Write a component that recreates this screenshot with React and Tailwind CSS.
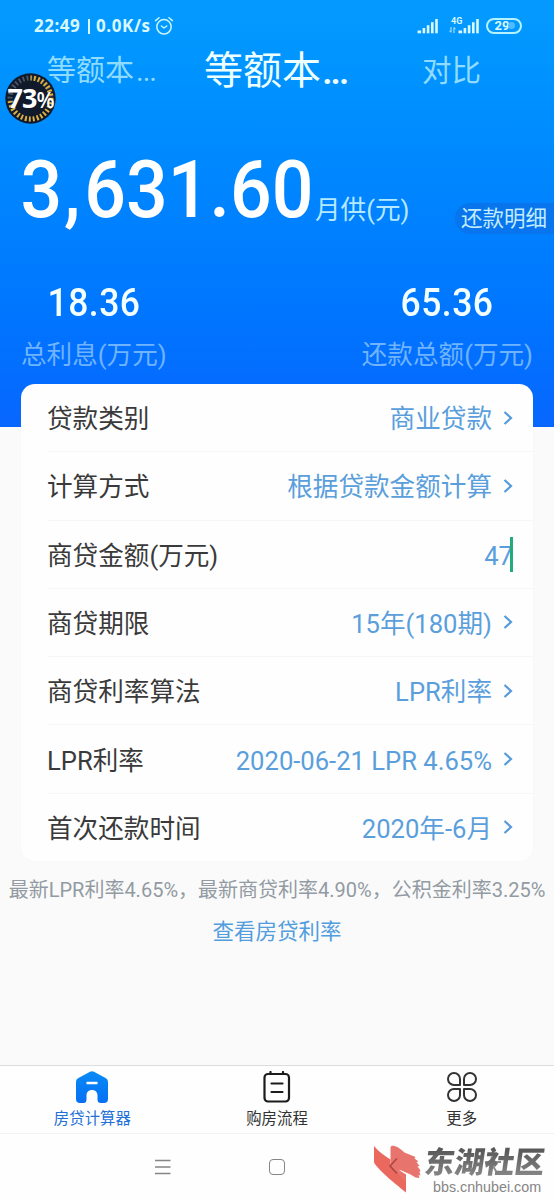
import React from 'react';

const loanRows = [
  { label: '贷款类别', value: '商业贷款' },
  { label: '计算方式', value: '根据贷款金额计算' },
  { label: '商贷金额(万元)', value: '47', input: true },
  { label: '商贷期限', value: '15年(180期)' },
  { label: '商贷利率算法', value: 'LPR利率' },
  { label: 'LPR利率', value: '2020-06-21 LPR 4.65%' },
  { label: '首次还款时间', value: '2020年-6月' },
];

const SignalIcon = () => (
  <svg width="22" height="16" viewBox="0 0 22 16" fill="#d8f8ff">
    <rect x="0.5" y="12.5" width="3.6" height="2.8" />
    <rect x="5.6" y="10" width="2.6" height="5.3" />
    <rect x="9.8" y="7.2" width="2.6" height="8.1" />
    <rect x="14" y="4.2" width="2.6" height="11.1" />
    <rect x="18.2" y="1" width="2.6" height="14.3" />
  </svg>
);

const AlarmIcon = () => (
  <svg width="20" height="20" viewBox="0 0 20 20" fill="none" stroke="#c8f6ff" strokeWidth="1.5" strokeLinecap="round" strokeLinejoin="round">
    <circle cx="10" cy="10.8" r="7.2" />
    <path d="M7.4 10l2.6 2 2.8-2M1.6 4.6l3.4-2.9M18.4 4.6L15 1.7" />
  </svg>
);

const StatusBar = () => (
  <div className="flex h-[50px] items-center pl-[34px] pr-[32px] pt-[1px] text-[#d8f8ff]">
    <div className="flex font-['Open_Sans',sans-serif] text-[17px] font-bold leading-5">
      <span className="w-[49px] tracking-[0.5px]">22:49</span>
      <span className="mx-[5px] mt-[3px] h-[15px] w-[2px] bg-[#d8f8ff]" />
      <span className="w-[59px] pl-[1px] tracking-[0.6px]">0.0K/s</span>
    </div>
    <AlarmIcon />
    <div className="ml-auto flex items-center">
      <SignalIcon />
      <div className="relative ml-[19px]">
        <SignalIcon />
        <span className="absolute -left-[7px] -top-[2px] font-['Roboto',sans-serif] text-[9px] font-bold leading-[10px]">4G</span>
        <svg className="absolute -left-[9px] top-[8px]" width="8" height="8" viewBox="0 0 8 8" fill="none" stroke="#b8ecff">
          <path d="M2 1v5M0.5 4.8L2 6.5M5 7V1.5l1.6 1.4" />
        </svg>
      </div>
      <div className="ml-[6px] flex h-[16px] w-[36px] items-center justify-center rounded-full border-2 border-[#b4f3ff] pl-[2px] font-['Roboto',sans-serif] text-[13px] font-bold leading-3">
        29<span className="-ml-px size-[7px] rounded-full bg-[#4fbcff]" />
      </div>
    </div>
  </div>
);

const BatteryBadge = () => (
  <div className="absolute left-[5px] top-[73px] flex h-[51px] w-[51px] items-center justify-center">
    <svg className="absolute inset-0" width="51" height="51" viewBox="0 0 51 51" fill="none">
      <circle cx="25.5" cy="25.5" r="25.2" fill="#101a2b" />
      <circle cx="25.5" cy="25.5" r="20.5" stroke="#4a5566" strokeWidth="5" strokeDasharray="1.8 2.2" />
      <circle cx="25.5" cy="25.5" r="20.5" stroke="#e3b13a" strokeWidth="5" strokeDasharray="1.8 2.2" pathLength="128.8" mask="url(#level)" />
      <mask id="level" maskUnits="userSpaceOnUse" x="0" y="0" width="51" height="51">
        <circle cx="25.5" cy="25.5" r="20.5" stroke="#fff" strokeWidth="7" pathLength="100" strokeDasharray="73 100" transform="rotate(-90 25.5 25.5)" />
      </mask>
    </svg>
    <span className="relative whitespace-nowrap pb-[3px] font-['Open_Sans',sans-serif] text-[27px] font-bold leading-none tracking-[-1px] text-white">
      73<span className="text-[21px] font-semibold">%</span>
    </span>
  </div>
);

const Total = ({ value, label }) => (
  <div className="flex flex-col items-center">
    <span className="scale-x-[0.91] font-['Roboto',sans-serif] text-[39px] font-medium leading-[42px] tracking-[0.5px] text-[#f4ffff]">{value}</span>
    <span className="mt-[13px] text-[25.6px] leading-[36px] text-[#70b4ff]">{label}</span>
  </div>
);

const Header = () => (
  <header className="relative h-[427px] bg-linear-to-b from-[#0399ff] from-5% to-[#0866ff]">
    <StatusBar />
    <div className="flex h-[42px] items-center whitespace-nowrap">
      <span className="w-[158px] pl-[47px] text-[29px] leading-[42px] text-[#8fdcff]">等额本<span className="ml-[2px] tracking-[-1px]">...</span></span>
      <span className="w-[264px] pl-[46px] text-[39px] leading-[42px] text-[#eeffff]">等额本<span className="ml-px font-medium tracking-[-2.5px]">...</span></span>
      <span className="text-[29.5px] leading-[42px] text-[#8fdcff]">对比</span>
    </div>
    <BatteryBadge />

    <div className="mt-[54px] flex h-[87px] items-start">
      <div className="flex w-[294px] origin-left scale-x-[0.93] pl-[22px] font-['Roboto',sans-serif] text-[79px] font-medium leading-[88px] text-white">
        3<span className="mr-[4px] pl-[2px]">,</span>631<span>.</span>60
      </div>
      <span className="ml-[21px] mt-[46px] text-[25.6px] leading-[36px] text-[#b5e9ff]">月供(元)</span>
      <button className="ml-auto mt-[57px] h-[31px] w-[99px] whitespace-nowrap rounded-l-full bg-[#0b6fe6]/70 pl-[6px] text-left text-[21.5px] leading-[31px] text-[#c2ecff]">还款明细</button>
    </div>

    <div className="mt-[49px] flex justify-between pl-[21px] pr-[21px]">
      <Total value="18.36" label="总利息(万元)" />
      <Total value="65.36" label="还款总额(万元)" />
    </div>
  </header>
);

const LoanForm = () => (
  <section className="relative mx-[21px] -mt-[43px] flex h-[477px] flex-col rounded-[14px] bg-[#fefefe] pl-[26px] shadow-[0_0_3px_rgba(0,0,0,0.02)]">
    {loanRows.map((row) => (
      <div key={row.label} className="flex flex-1 items-center border-b border-[#f5f6f6] pr-[20px] text-[25.6px] leading-[36px] last:border-b-0">
        <span className="pt-[3px] text-[#3a3a3a]">{row.label}</span>
        <span className="ml-auto pt-[3px] text-[#5a9fdc]">{row.value}</span>
        {row.input ? (
          <span className="-ml-[3px] h-[35px] w-[3px] bg-[#22ac7b]" />
        ) : (
          <svg className="ml-[11px]" width="10" height="16" viewBox="0 0 10 16" fill="none" stroke="#559bdc" strokeWidth="2.2">
            <path d="M1.5 2L8 8l-6.5 6" />
          </svg>
        )}
      </div>
    ))}
  </section>
);

const HomeIcon = () => (
  <svg width="32" height="32" viewBox="0 0 32 32">
    <defs>
      <linearGradient id="home" x1="0" y1="0" x2="0" y2="1">
        <stop offset="0" stopColor="#088bf5" />
        <stop offset="1" stopColor="#076ff5" />
      </linearGradient>
    </defs>
    <path fill="url(#home)" d="M14 .8Q16-.3 18 .8L30 7.2q2 1.2 2 3.5V28q0 4-4 4h-3q-3.5 0-3.5-3.5V24.5c0-3.3-2.2-5.5-5.500-5.5S10.500 21.2 10.500 24.5V28.5q0 3.500-3 3.500H4q-4 0-4-4V10.700q0-2.300 2-3.500z" />
    <rect x="10.5" y="10.7" width="11" height="2.6" rx="0.5" fill="#fff" />
  </svg>
);

const ProcessIcon = () => (
  <svg width="28" height="32" viewBox="0 0 28 32" fill="none" stroke="#1c1c1c" strokeWidth="2.2" strokeLinecap="round">
    <rect x="1.5" y="3" width="24.5" height="27.5" rx="3.5" />
    <path d="M7.5 1v2M20 1v2M8.5 12.5h11M8.5 21h11" />
  </svg>
);

const MoreIcon = () => (
  <svg width="30" height="30" viewBox="0 0 30 30" fill="none" stroke="#333" strokeWidth="2" strokeLinejoin="round">
    <path d="M13 13H7a6 6 0 1 1 6-6zM17 13V7a6 6 0 1 1 6 6zM13 17v6a6 6 0 1 1-6-6zM17 17h6a6 6 0 1 1-6 6z" />
  </svg>
);

const tabs = [
  { label: '房贷计算器', icon: <HomeIcon />, active: true },
  { label: '购房流程', icon: <ProcessIcon /> },
  { label: '更多', icon: <MoreIcon /> },
];

const TabBar = () => (
  <nav className="grid h-[69px] grid-cols-3 border-b border-t border-b-[#f3f3f3] border-t-[#dedede] bg-[#fefefe]">
    {tabs.map((tab) => (
      <div key={tab.label} className="flex flex-col items-center pt-[5px]">
        <span className="flex h-[32px] items-center">{tab.icon}</span>
        <span className={tab.active ? 'mt-[5px] text-[15.4px] leading-[22px] text-[#2470d8]' : 'mt-[5px] text-[15.4px] leading-[22px] text-[#333]'}>{tab.label}</span>
      </div>
    ))}
  </nav>
);

const ForumMark = () => (
  <div className="absolute right-[6px] top-[11px] flex w-[175px]">
    <svg width="50" height="50" viewBox="0 0 50 50">
      <path fill="#e8584d" fillOpacity="0.9" d="M1 1C6 7 12 11 17.500 14.500V20l15.500 9.500V47.500C24 40 6 26 1 17.500z" />
      <path fill="#e8756d" d="M17.500 3c0-2.500 2-2.500 4-2 4 1 7 4 10 6.500l11 4.500-1 1.500 4 3-2 .5 3 4-2 .5 3 4-1 1.500 1 3.500-2-.5 1 3-4-.5-5-3-9-4-3-.5 7 6v6L17.500 20z" />
      <path fill="none" stroke="#a9453f" strokeWidth="1.5" d="M24 13.500l-7 7.500 7 7.500" />
    </svg>
    <div className="relative ml-[2px] flex flex-col">
      <svg className="absolute left-[59px] top-[11px]" width="18" height="18" viewBox="0 0 18 18" fill="none" stroke="#444" strokeOpacity="0.6" strokeWidth="2">
        <circle cx="9" cy="2.5" r="1.5" />
        <path d="M1 6h16M9 6v5M9 10l-4 7M9 10l4 7" />
      </svg>
      <span className="-mt-[3px] -skew-x-8 whitespace-nowrap bg-linear-to-b from-[#4c4c4c] to-[#8c8c8c] bg-clip-text font-['Noto_Sans_CJK_SC',sans-serif] text-[30px] font-black leading-[37px] text-transparent">东湖社区</span>
      <span className="ml-[8px] font-['Liberation_Sans',sans-serif] text-[14.3px] leading-[16px] text-[#858585]">bbs.cnhubei.com</span>
    </div>
  </div>
);

const SystemNav = () => (
  <div className="relative flex h-[66px] items-center bg-[#fefefe]">
    <svg className="ml-[155px]" width="16" height="16" viewBox="0 0 16 16" stroke="#858585" strokeWidth="1.4">
      <path d="M0 1.5h15.5M0 8h15.5M0 14.5h15.5" />
    </svg>
    <div className="ml-[98px] h-[16px] w-[16px] rounded-[4px] border-[1.5px] border-[#858585]" />
    <ForumMark />
  </div>
);

const App = () => {
  return (
    <div className="flex h-[1200px] w-[554px] flex-col overflow-hidden bg-[#fafafa] font-['Roboto','Noto_Sans_CJK_SC',sans-serif]">
      <Header />
      <LoanForm />
      <div className="mt-[15px] flex flex-col items-center whitespace-nowrap">
        <p className="text-[20px] leading-[28px] text-[#929ba3]">最新LPR利率4.65%，最新商贷利率4.90%，公积金利率3.25%</p>
        <a className="mt-[13px] text-[21.5px] leading-[30px] text-[#519dde]">查看房贷利率</a>
      </div>
      <div className="mt-auto">
        <TabBar />
        <SystemNav />
      </div>
    </div>
  );
};

export default App;
